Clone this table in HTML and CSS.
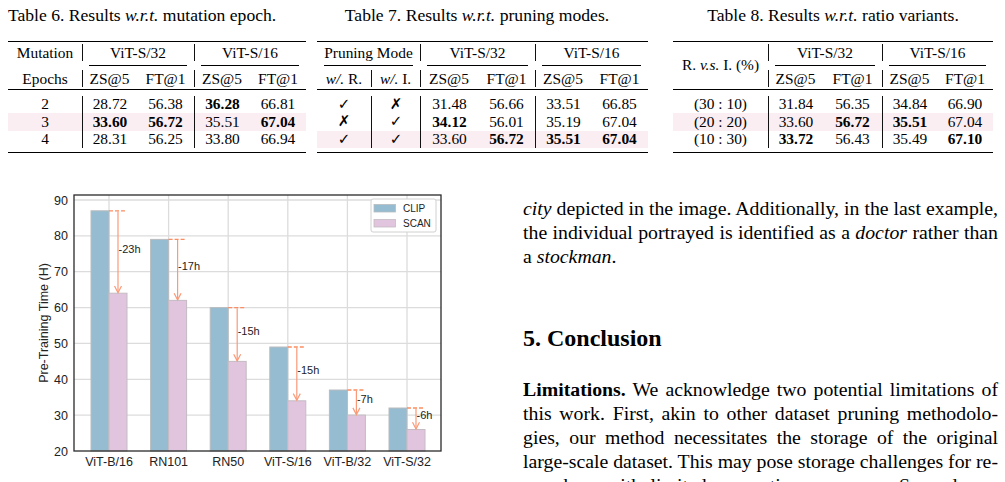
FILE: index.html
```html
<!DOCTYPE html>
<html>
<head>
<meta charset="utf-8">
<link rel="stylesheet" href="styles.css">
</head>
<body>
<div class="page">
  <div class="tables">
    <div class="tblock b6">
      <div class="caption">Table 6. Results <i>w.r.t.</i> mutation epoch.</div>
      <div class="tbl t6">
        <div class="c">Mutation</div>
        <div class="c s2 hb">ViT-S/32</div>
        <div class="c s2 hb">ViT-S/16</div>
        <div class="cm"></div>
        <div class="cm s2"><span class="rl"></span></div>
        <div class="cm s2"><span class="rl"></span></div>
        <div class="c">Epochs</div>
        <div class="c hb">ZS@5</div>
        <div class="c">FT@1</div>
        <div class="c hb">ZS@5</div>
        <div class="c">FT@1</div>
        <div class="mid"></div>
        <div class="c">2</div><div class="c db">28.72</div><div class="c">56.38</div><div class="c db"><b>36.28</b></div><div class="c">66.81</div>
        <div class="c hl">3</div><div class="c db hl"><b>33.60</b></div><div class="c hl"><b>56.72</b></div><div class="c db hl">35.51</div><div class="c hl"><b>67.04</b></div>
        <div class="c">4</div><div class="c db">28.31</div><div class="c">56.25</div><div class="c db">33.80</div><div class="c">66.94</div>
      </div>
    </div>
    <div class="tblock b7">
      <div class="caption">Table 7. Results <i>w.r.t.</i> pruning modes.</div>
      <div class="tbl t7">
        <div class="c s2">Pruning Mode</div>
        <div class="c s2 hb">ViT-S/32</div>
        <div class="c s2 hb">ViT-S/16</div>
        <div class="cm s2"><span class="rl"></span></div>
        <div class="cm s2"><span class="rl"></span></div>
        <div class="cm s2"><span class="rl"></span></div>
        <div class="c"><span><i>w/.</i> R.</span></div>
        <div class="c hb"><span><i>w/.</i> I.</span></div>
        <div class="c hb">ZS@5</div>
        <div class="c">FT@1</div>
        <div class="c hb">ZS@5</div>
        <div class="c">FT@1</div>
        <div class="mid"></div>
        <div class="c ck">✓</div><div class="c ck db">✗</div><div class="c db">31.48</div><div class="c">56.66</div><div class="c db">33.51</div><div class="c">66.85</div>
        <div class="c ck">✗</div><div class="c ck db">✓</div><div class="c db"><b>34.12</b></div><div class="c">56.01</div><div class="c db">35.19</div><div class="c">67.04</div>
        <div class="c ck hl">✓</div><div class="c ck db hl">✓</div><div class="c db hl">33.60</div><div class="c hl"><b>56.72</b></div><div class="c db hl"><b>35.51</b></div><div class="c hl"><b>67.04</b></div>
      </div>
    </div>
    <div class="tblock b8">
      <div class="caption">Table 8. Results <i>w.r.t.</i> ratio variants.</div>
      <div class="tbl t8">
        <div class="c r3"><span>R. <i>v.s.</i> I. (%)</span></div>
        <div class="c s2 hb">ViT-S/32</div>
        <div class="c s2 hb">ViT-S/16</div>
        <div class="cm s2"><span class="rl"></span></div>
        <div class="cm s2"><span class="rl"></span></div>
        <div class="c hb">ZS@5</div>
        <div class="c">FT@1</div>
        <div class="c hb">ZS@5</div>
        <div class="c">FT@1</div>
        <div class="mid"></div>
        <div class="c">(30 : 10)</div><div class="c db">31.84</div><div class="c">56.35</div><div class="c db">34.84</div><div class="c">66.90</div>
        <div class="c hl">(20 : 20)</div><div class="c db hl">33.60</div><div class="c hl"><b>56.72</b></div><div class="c db hl"><b>35.51</b></div><div class="c hl">67.04</div>
        <div class="c">(10 : 30)</div><div class="c db"><b>33.72</b></div><div class="c">56.43</div><div class="c db">35.49</div><div class="c"><b>67.10</b></div>
      </div>
    </div>
  </div>

  <div class="bottom">
    <svg class="chart" width="500" height="302" viewBox="0 180 500 302">
      <g class="grid">
        <line x1="74" y1="200" x2="441" y2="200"/>
        <line x1="74" y1="235.9" x2="441" y2="235.9"/>
        <line x1="74" y1="271.7" x2="441" y2="271.7"/>
        <line x1="74" y1="307.6" x2="441" y2="307.6"/>
        <line x1="74" y1="343.4" x2="441" y2="343.4"/>
        <line x1="74" y1="379.3" x2="441" y2="379.3"/>
        <line x1="74" y1="415.1" x2="441" y2="415.1"/>
        <line x1="109" y1="195" x2="109" y2="451"/>
        <line x1="168.6" y1="195" x2="168.6" y2="451"/>
        <line x1="228.2" y1="195" x2="228.2" y2="451"/>
        <line x1="287.8" y1="195" x2="287.8" y2="451"/>
        <line x1="347.4" y1="195" x2="347.4" y2="451"/>
        <line x1="407" y1="195" x2="407" y2="451"/>
      </g>
      <g class="clip">
        <rect x="91" y="210.8" width="18" height="240.2"/>
        <rect x="150.6" y="239.4" width="18" height="211.6"/>
        <rect x="210.2" y="307.6" width="18" height="143.4"/>
        <rect x="269.8" y="347" width="18" height="104"/>
        <rect x="329.4" y="390" width="18" height="61"/>
        <rect x="389" y="408" width="18" height="43"/>
      </g>
      <g class="scan">
        <rect x="109" y="293.2" width="18" height="157.8"/>
        <rect x="168.6" y="300.4" width="18" height="150.6"/>
        <rect x="228.2" y="361.4" width="18" height="89.6"/>
        <rect x="287.8" y="400.8" width="18" height="50.2"/>
        <rect x="347.4" y="415.1" width="18" height="35.9"/>
        <rect x="407" y="429.5" width="18" height="21.5"/>
      </g>
      <g class="dash">
        <line x1="109" y1="210.8" x2="127" y2="210.8"/>
        <line x1="168.6" y1="239.4" x2="186.6" y2="239.4"/>
        <line x1="228.2" y1="307.6" x2="246.2" y2="307.6"/>
        <line x1="287.8" y1="347" x2="305.8" y2="347"/>
        <line x1="347.4" y1="390" x2="365.4" y2="390"/>
        <line x1="407" y1="408" x2="425" y2="408"/>
      </g>
      <g class="arrow">
        <line x1="118" y1="211.5" x2="118" y2="292.5"/>
        <polyline points="114.5,286 118,292.7 121.5,286"/>
        <line x1="177.6" y1="240" x2="177.6" y2="299.7"/>
        <polyline points="174.1,293.2 177.6,299.9 181.1,293.2"/>
        <line x1="237.2" y1="308.2" x2="237.2" y2="360.7"/>
        <polyline points="233.7,354.2 237.2,360.9 240.7,354.2"/>
        <line x1="296.8" y1="347.6" x2="296.8" y2="400.1"/>
        <polyline points="293.3,393.6 296.8,400.3 300.3,393.6"/>
        <line x1="356.4" y1="390.6" x2="356.4" y2="414.4"/>
        <polyline points="352.9,407.9 356.4,414.6 359.9,407.9"/>
        <line x1="416" y1="408.6" x2="416" y2="428.8"/>
        <polyline points="412.5,422.3 416,429 419.5,422.3"/>
      </g>
      <g class="ann">
        <text x="118.5" y="252.5">-23h</text>
        <text x="178.1" y="270.4">-17h</text>
        <text x="237.7" y="335">-15h</text>
        <text x="297.3" y="374.4">-15h</text>
        <text x="356.9" y="403.1">-7h</text>
        <text x="416.5" y="419.3">-6h</text>
      </g>
      <rect class="spine" x="74" y="195" width="367" height="256"/>
      <g class="yt">
        <text x="68" y="204.5">90</text>
        <text x="68" y="240.4">80</text>
        <text x="68" y="276.2">70</text>
        <text x="68" y="312.1">60</text>
        <text x="68" y="347.9">50</text>
        <text x="68" y="383.8">40</text>
        <text x="68" y="419.6">30</text>
        <text x="68" y="455.5">20</text>
      </g>
      <g class="xt">
        <text x="109" y="466">ViT-B/16</text>
        <text x="168.6" y="466">RN101</text>
        <text x="228.2" y="466">RN50</text>
        <text x="287.8" y="466">ViT-S/16</text>
        <text x="347.4" y="466">ViT-B/32</text>
        <text x="407" y="466">ViT-S/32</text>
      </g>
      <text class="ylab" transform="translate(47.5 323) rotate(-90)">Pre-Training Time (H)</text>
      <rect class="legend" x="371" y="199" width="65" height="33" rx="2"/>
      <rect class="clip-p" x="374" y="204.5" width="21.5" height="7.5"/>
      <rect class="scan-p" x="374" y="219.5" width="21.5" height="7.5"/>
      <text class="lg" x="403" y="212">CLIP</text>
      <text class="lg" x="403" y="226.5">SCAN</text>
    </svg>

    <div class="text">
      <p class="para">
        <span class="ln"><i>city</i> depicted in the image. Additionally, in the last example,</span>
        <span class="ln">the individual portrayed is identified as a <i>doctor</i> rather than</span>
        <span class="last">a <i>stockman</i>.</span>
      </p>
      <h2 class="sec">5. Conclusion</h2>
      <p class="para">
        <span class="ln"><b>Limitations.</b> We acknowledge two potential limitations of</span>
        <span class="ln">this work. First, akin to other dataset pruning methodolo-</span>
        <span class="ln">gies, our method necessitates the storage of the original</span>
        <span class="ln">large-scale dataset. This may pose storage challenges for re-</span>
        <span class="ln">searchers with limited computing resources. Second, our</span>
      </p>
    </div>
  </div>
</div>
</body>
</html>
```

FILE: styles.css
```css
html, body {
  margin: 0;
  padding: 0;
  background: #fff;
}
body {
  font-family: "Liberation Serif", "Times New Roman", serif;
  color: #000;
}
.page {
  width: 1005px;
  height: 482px;
  overflow: hidden;
}

/* ---------- tables ---------- */
.tables {
  display: flex;
  align-items: flex-start;
  height: 180px;
  box-sizing: border-box;
  padding-top: 5px;
}
.tblock {
  display: flex;
  flex-direction: column;
}
.b6 { margin-left: 8px; width: 298px; }
.b7 { margin-left: 11px; width: 331px; }
.b8 { margin-left: 25px; width: 320px; }

.caption {
  font-size: 17.6px;
  line-height: 20px;
  height: 20px;
  margin-bottom: 16px;
  white-space: nowrap;
  text-align: center;
}
.b6 .caption { text-align: left; }
.b7 .caption { padding-right: 11px; }

.tbl {
  display: grid;
  grid-template-rows: 21.5px 5px 20px 7px 17.5px 17.5px 17.5px;
  border-top: 1.5px solid #000;
  border-bottom: 1.5px solid #000;
  padding-bottom: 3.5px;
  font-size: 15.4px;
}
.t6 { grid-template-columns: 74px 55px 57px 56px 56px; }
.t7 { grid-template-columns: 54px 49px 58px 57px 56px 57px; }
.t8 { grid-template-columns: 95px 55px 59px 55px 56px; }

.c {
  display: flex;
  align-items: center;
  justify-content: center;
  white-space: nowrap;
}
.s2 { grid-column: span 2; }
.r3 { grid-row: span 3; }
.hb {
  background: linear-gradient(#111, #111) left center / 1px 17px no-repeat;
}
.db { border-left: 1px solid #111; }
.hl { background-color: #fbeef3; }
.cm { padding: 1.5px 7px 0; }
.rl {
  display: block;
  border-top: 0.8px solid #000;
}
.mid {
  grid-column: 1 / -1;
  border-top: 0.8px solid #000;
  margin-top: 0.5px;
}
.ck {
  font-family: "DejaVu Sans", sans-serif;
  font-size: 15px;
  font-weight: bold;
  line-height: 15px;
}

/* ---------- bottom ---------- */
.bottom {
  display: flex;
  align-items: flex-start;
}
.chart {
  display: block;
  flex: none;
}
.chart text { font-family: "Liberation Sans", Arial, sans-serif; }
.grid line { stroke: #dcdcdc; stroke-width: 1.3; }
.clip rect { fill: #95bcd1; stroke: #b9bcbe; stroke-width: 1; }
.scan rect { fill: #e1c4dd; stroke: #c4bcc2; stroke-width: 1; }
.dash line { stroke: #fc8d62; stroke-width: 1.3; stroke-dasharray: 4 2; }
.arrow line, .arrow polyline { stroke: #fb9a78; stroke-width: 1.2; fill: none; }
.ann text { font-size: 11px; fill: #222; }
.spine { fill: none; stroke: #2a2a2a; stroke-width: 1.3; }
.yt text { font-size: 12.5px; fill: #222; text-anchor: end; }
.xt text { font-size: 12.5px; fill: #222; text-anchor: middle; }
.ylab { font-size: 12.5px; fill: #222; text-anchor: middle; }
.legend { fill: #fff; stroke: #d0d0d0; stroke-width: 1; }
.clip-p { fill: #95bcd1; stroke: #b9bcbe; stroke-width: 0.8; }
.scan-p { fill: #e1c4dd; stroke: #c4bcc2; stroke-width: 0.8; }
.lg { font-size: 10px; fill: #222; }

.text {
  width: 475px;
  margin-left: 23px;
  padding-top: 16px;
  font-size: 19.8px;
  line-height: 24px;
}
.para { margin: 0; }
.ln {
  display: block;
  text-align: justify;
  text-align-last: justify;
  word-spacing: -2px;
}
.last { display: block; }
.sec {
  margin: 56px 0 25px;
  font-size: 24px;
  line-height: 28px;
  font-weight: bold;
}
```
